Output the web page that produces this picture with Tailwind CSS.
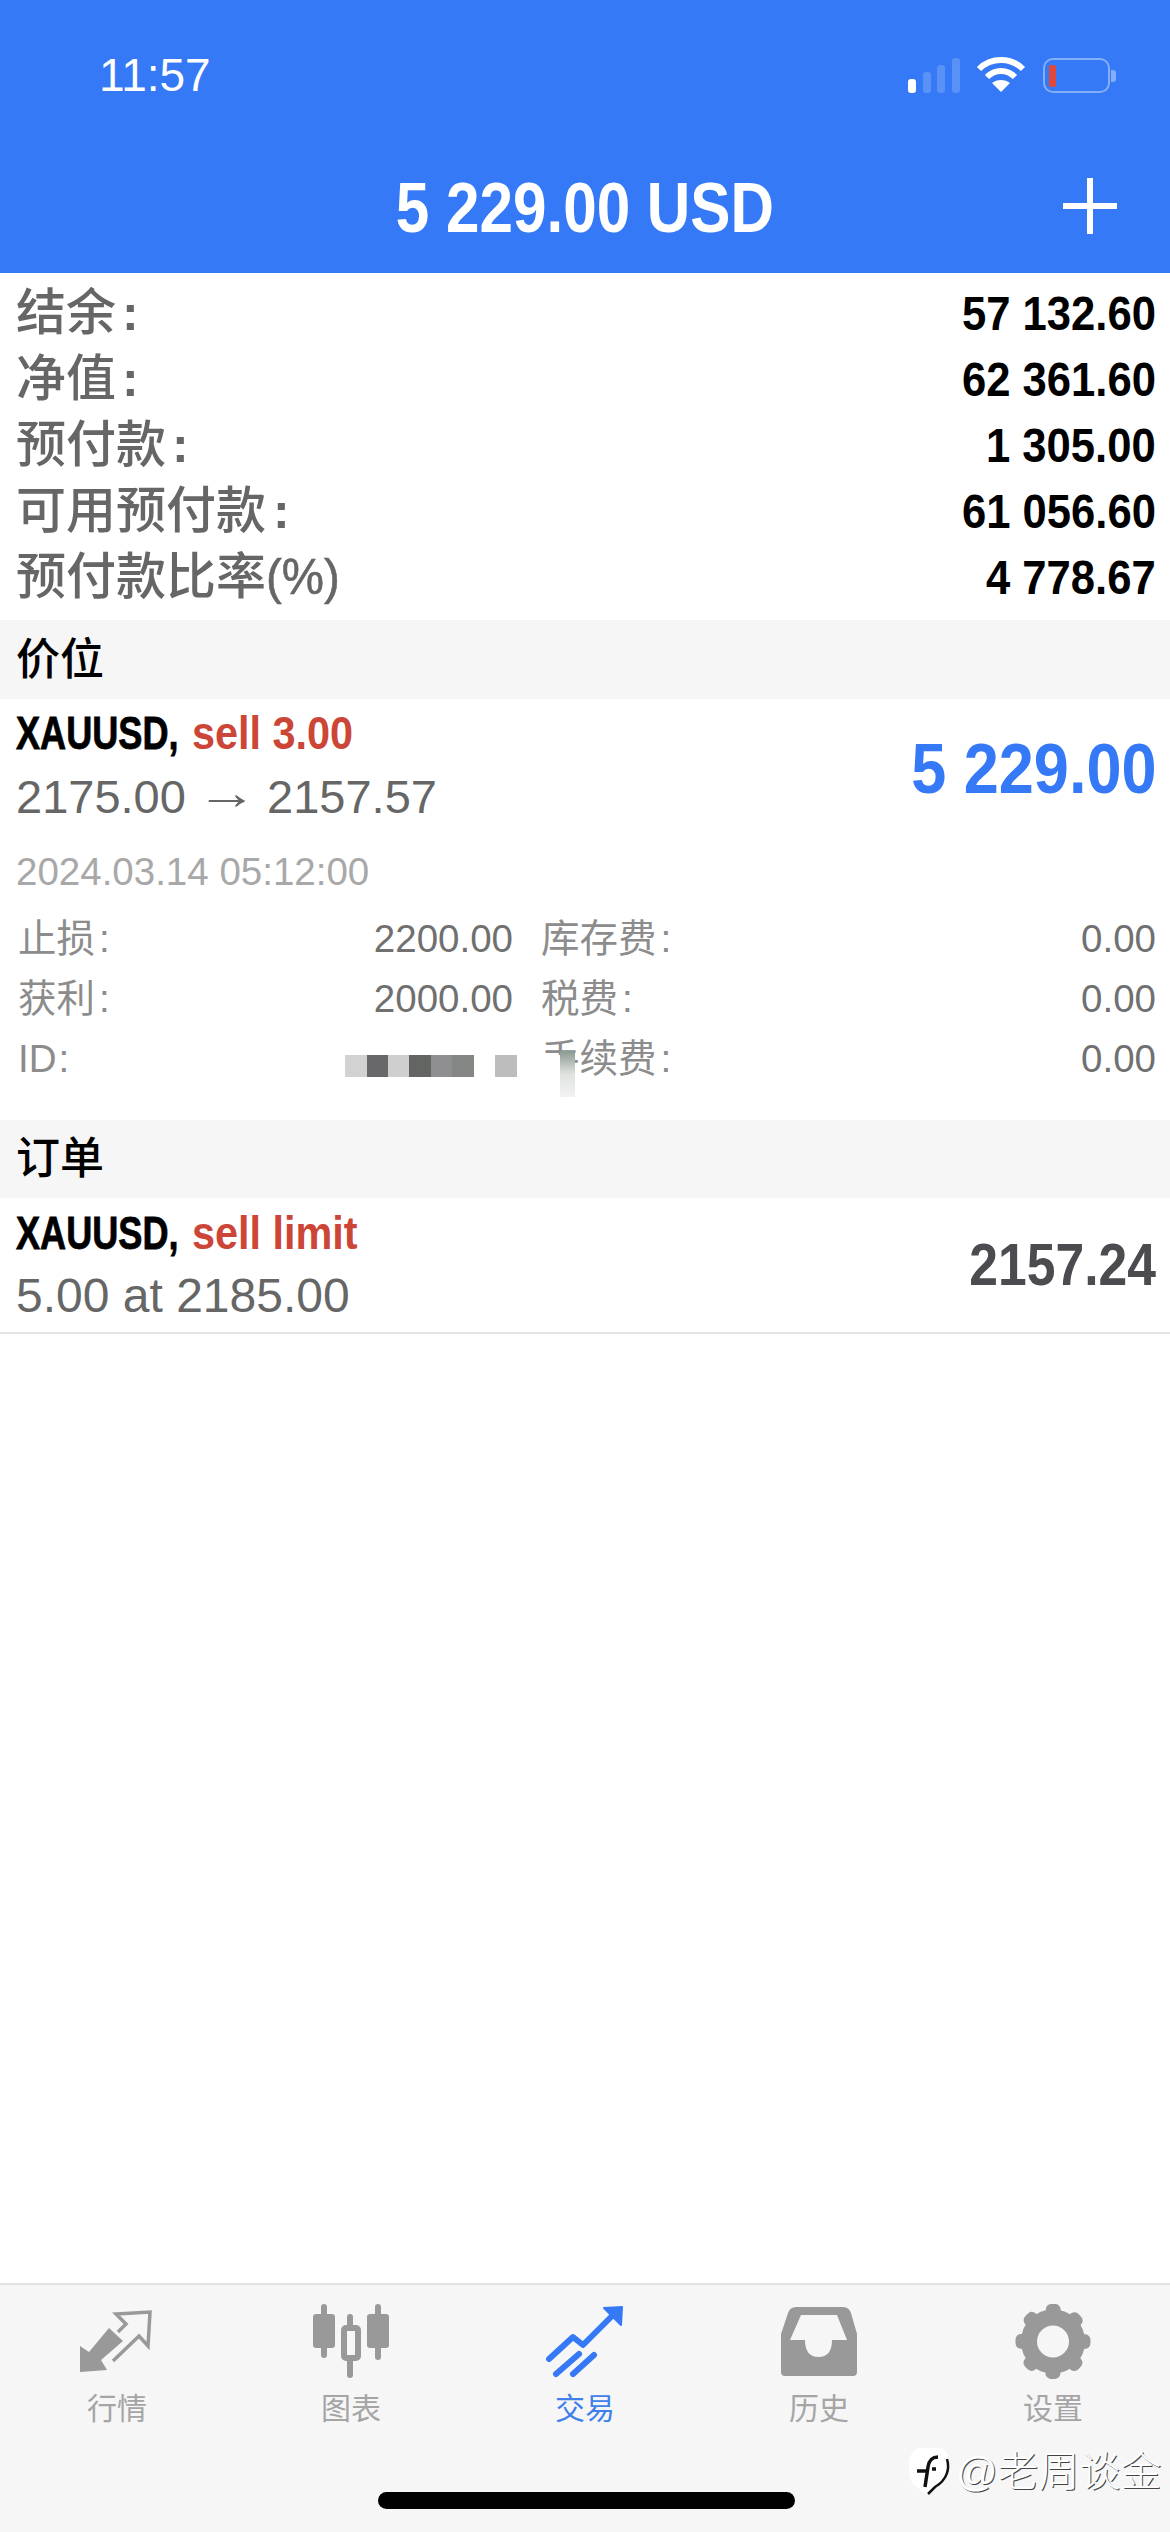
<!DOCTYPE html>
<html lang="zh-CN">
<head>
    <meta charset="UTF-8">
    <meta name="viewport" content="width=device-width, initial-scale=1.0">
    <title>交易</title>
    <script src="https://cdn.jsdelivr.net/npm/@tailwindcss/browser@4"></script>
</head>
<body class="bg-white">
    <div class="relative flex flex-col w-[1170px] h-[2532px] overflow-hidden bg-white font-['Liberation_Sans','Noto_Sans_CJK_SC',sans-serif]">
        <!-- Header -->
        <header class="h-[273px] bg-[#3579f6] text-white shrink-0">
            <div class="flex items-center h-[64px] mt-[43px] pl-[99px] pt-0">
                <span class="text-[46px] leading-[64px]">11:57</span>
                <div class="flex items-center ml-auto mr-[60px]">
                    <svg class="w-[52px] h-[36px]" viewBox="0 0 52 36">
                        <rect x="0" y="22" width="8" height="14" rx="3" fill="#fff"/>
                        <rect x="15" y="15" width="8" height="21" rx="3" fill="#fff" fill-opacity=".18"/>
                        <rect x="29" y="8" width="8" height="28" rx="3" fill="#fff" fill-opacity=".18"/>
                        <rect x="44" y="1" width="8" height="35" rx="3" fill="#fff" fill-opacity=".18"/>
                    </svg>
                    <svg class="w-[50px] h-[38px] ml-[16px]" viewBox="0 0 50 38" fill="none" stroke="#fff" stroke-width="6">
                        <path d="M3 13C15 1 35 1 47 13"/>
                        <path d="M11 21C19 13 31 13 39 21"/>
                        <path d="M25 36L16 27C21 23 29 23 34 27Z" fill="#fff" stroke="none"/>
                    </svg>
                    <div class="relative w-[67px] h-[35px] ml-[17px] rounded-[10px] border-2 border-white/40">
                        <div class="absolute left-[4px] top-[5px] w-[7px] h-[22px] rounded-[2px] bg-[#e0463a]"></div>
                        <div class="absolute -right-[8px] top-[10px] w-[5px] h-[12px] rounded-r-[3px] bg-white/40"></div>
                    </div>
                </div>
            </div>
            <div class="grid grid-cols-[1fr_auto_1fr] items-center h-[130px] mt-[36px]">
                <div></div>
                <div class="text-[70px] font-bold leading-[130px] whitespace-nowrap scale-x-[.86]">5 229.00 USD</div>
                <svg class="justify-self-end mr-[53px] -mt-[4px] w-[54px] h-[56px]" viewBox="0 0 54 56" fill="#fff">
                    <rect x="24" y="0" width="6" height="56"/>
                    <rect x="0" y="25" width="54" height="6"/>
                </svg>
            </div>
        </header>

        <main class="flex-1">
            <!-- Account summary -->
            <section class="pt-[7px] pb-[10px] pl-[16px] pr-[14px] text-[50px] leading-[66px] font-medium text-[#666]">
                <div class="flex justify-between h-[66px]"><span>结余<span class="ml-[6px] font-bold">:</span></span><b class="text-[49px] text-black origin-right scale-x-[.89] whitespace-nowrap">57 132.60</b></div>
                <div class="flex justify-between h-[66px]"><span>净值<span class="ml-[6px] font-bold">:</span></span><b class="text-[49px] text-black origin-right scale-x-[.89] whitespace-nowrap">62 361.60</b></div>
                <div class="flex justify-between h-[66px]"><span>预付款<span class="ml-[6px] font-bold">:</span></span><b class="text-[49px] text-black origin-right scale-x-[.89] whitespace-nowrap">1 305.00</b></div>
                <div class="flex justify-between h-[66px]"><span>可用预付款<span class="ml-[7px] font-bold">:</span></span><b class="text-[49px] text-black origin-right scale-x-[.89] whitespace-nowrap">61 056.60</b></div>
                <div class="flex justify-between h-[66px]"><span>预付款比率<span class="inline-block origin-left scale-x-[.95] [-webkit-text-stroke:0.6px_#666]">(%)</span></span><b class="text-[49px] text-black origin-right scale-x-[.89] whitespace-nowrap">4 778.67</b></div>
            </section>

            <!-- Positions -->
            <h2 class="h-[79px] px-[16px] bg-[#f6f6f6] text-[44px] leading-[79px] font-medium text-black">价位</h2>
            <section class="relative h-[421px] pl-[16px] pr-[14px]">
                <div class="flex justify-between items-center h-[130px] pt-[2px]">
                    <div>
                        <div class="flex h-[64px] text-[46px] leading-[64px] font-bold whitespace-nowrap">
                            <span class="text-black origin-left scale-x-[.785] mr-[-31px] [-webkit-text-stroke:0.8px_black]">XAUUSD,</span>
                            <span class="text-[#cc4638] origin-left scale-x-[.9]">sell 3.00</span>
                        </div>
                        <div class="h-[64px] text-[47px] leading-[64px] text-[#666] whitespace-nowrap">2175.00 <span class="inline-block mx-[4px] -translate-y-[4px] scale-x-[1.3]">→</span> 2157.57</div>
                    </div>
                    <div class="mt-[8px] text-[70px] font-bold text-[#3579f6] whitespace-nowrap origin-right scale-x-[.9]">5 229.00</div>
                </div>
                <div class="h-[64px] mt-[11px] text-[38.5px] leading-[64px] text-[#a8a8a8]">2024.03.14 05:12:00</div>
                <div class="grid grid-cols-[497px_1fr] gap-x-[28px] mt-[5px] text-[38.5px] leading-[60px]">
                    <div class="flex justify-between h-[60px] pl-[2px]"><span class="text-[#8c8c8c]">止损<span class="ml-[4px]">:</span></span><span class="text-[#707070]">2200.00</span></div>
                    <div class="flex justify-between h-[60px]"><span class="text-[#8c8c8c]">库存费<span class="ml-[4px]">:</span></span><span class="text-[#707070]">0.00</span></div>
                    <div class="flex justify-between h-[60px] pl-[2px]"><span class="text-[#8c8c8c]">获利<span class="ml-[4px]">:</span></span><span class="text-[#707070]">2000.00</span></div>
                    <div class="flex justify-between h-[60px]"><span class="text-[#8c8c8c]">税费<span class="ml-[4px]">:</span></span><span class="text-[#707070]">0.00</span></div>
                    <div class="flex justify-between h-[60px] pl-[2px]"><span class="text-[#8c8c8c]">ID<span class="ml-[2px]">:</span></span></div>
                    <div class="flex justify-between h-[60px]"><span class="text-[#8c8c8c]">手续费<span class="ml-[4px]">:</span></span><span class="text-[#707070]">0.00</span></div>
                </div>
                <!-- blurred-out ticket id -->
                <div class="absolute left-[345px] top-[356px] flex h-[22px]">
                    <div class="w-[22px] bg-[#d2d2d2]"></div>
                    <div class="w-[21px] bg-[#68686a]"></div>
                    <div class="w-[21px] bg-[#cfcfcf]"></div>
                    <div class="w-[22px] bg-[#636563]"></div>
                    <div class="w-[21px] bg-[#8f8f91]"></div>
                    <div class="w-[22px] bg-[#858785]"></div>
                    <div class="w-[21px]"></div>
                    <div class="w-[22px] bg-[#bdbdbd]"></div>
                </div>
                <div class="absolute left-[541px] top-[356px] w-[19px] h-[42px] bg-white"></div>
                <div class="absolute left-[560px] top-[352px] w-[15px] h-[46px] bg-gradient-to-b from-[#8b9a90] via-[#dfe3e0] to-[#f2f2f2]"></div>
            </section>

            <!-- Orders -->
            <h2 class="h-[78px] px-[16px] bg-[#f6f6f6] text-[44px] leading-[78px] font-medium text-black">订单</h2>
            <section class="flex justify-between items-center h-[136px] pl-[16px] pr-[14px] border-b-2 border-[#e4e4e4]">
                <div>
                    <div class="flex h-[64px] -mt-[2px] text-[46px] leading-[64px] font-bold whitespace-nowrap">
                        <span class="text-black origin-left scale-x-[.785] mr-[-31px] [-webkit-text-stroke:0.8px_black]">XAUUSD,</span>
                        <span class="text-[#cc4638] origin-left scale-x-[.9]">sell limit</span>
                    </div>
                    <div class="h-[62px] text-[48px] leading-[62px] text-[#666] whitespace-nowrap">5.00 at 2185.00</div>
                </div>
                <div class="text-[60px] font-bold text-[#4c4c50] whitespace-nowrap origin-right scale-x-[.86]">2157.24</div>
            </section>
        </main>

        <!-- Tab bar -->
        <nav class="relative grid grid-cols-5 h-[249px] shrink-0 pt-[19px] bg-[#f6f6f6] border-t-2 border-[#e2e2e2] text-[30px] leading-[40px] text-[#a5a5a5]">
            <div class="flex flex-col items-center">
                <svg class="w-[80px] h-[76px]" viewBox="0 0 80 76">
                    <path d="M3 68V42L12 48L32 24L46 37L24 56L30 66Z" fill="#999"/>
                    <path d="M36 57L62 32L71 42L73 8L39 10L49 20L41 28" fill="none" stroke="#999" stroke-width="3.5"/>
                </svg>
                <span class="mt-[9px]">行情</span>
            </div>
            <div class="flex flex-col items-center">
                <svg class="w-[80px] h-[76px]" viewBox="0 0 80 76" fill="#999">
                    <rect x="10" y="0" width="6" height="54" rx="3"/>
                    <rect x="2" y="10" width="22" height="34" rx="3"/>
                    <rect x="36" y="10" width="6" height="64" rx="3"/>
                    <rect x="33" y="24" width="14" height="30" rx="2" fill="#f6f6f6" stroke="#999" stroke-width="6"/>
                    <rect x="64" y="0" width="6" height="56" rx="3"/>
                    <rect x="56" y="10" width="22" height="34" rx="3"/>
                </svg>
                <span class="mt-[9px]">图表</span>
            </div>
            <div class="flex flex-col items-center text-[#3f80ea]">
                <svg class="w-[80px] h-[76px] ml-[2px]" viewBox="0 0 80 76" fill="none" stroke="#3579f6" stroke-width="6" stroke-linecap="round" stroke-linejoin="round">
                    <path d="M3 55L27 33L37 41L69 9"/>
                    <path d="M10 70L33 50"/>
                    <path d="M27 70L48 51"/>
                    <path d="M58 4L76 3L75 21Z" fill="#3579f6" stroke-width="2"/>
                </svg>
                <span class="mt-[9px]">交易</span>
            </div>
            <div class="flex flex-col items-center">
                <svg class="w-[80px] h-[76px]" viewBox="0 0 80 76">
                    <path fill="#999" fill-rule="evenodd" d="M17 3H64Q70 3 72 9L78 30V68Q78 72 74 72H6Q2 72 2 68V30L9 9Q11 3 17 3ZM22 11H58L68 36H53Q53 53 39.5 53Q26 53 26 36H11Z"/>
                </svg>
                <span class="mt-[9px]">历史</span>
            </div>
            <div class="flex flex-col items-center">
                <svg class="w-[80px] h-[76px]" viewBox="0 0 80 76" fill="none" stroke="#999">
                    <circle cx="40" cy="37.5" r="24" stroke-width="16"/>
                    <circle cx="40" cy="37.5" r="32" stroke-width="11" stroke-linecap="round" stroke-dasharray="4 21.13" stroke-dashoffset="2"/>
                </svg>
                <span class="mt-[9px]">设置</span>
            </div>

            <!-- Home indicator -->
            <div class="absolute left-[378px] top-[207px] w-[417px] h-[17px] rounded-full bg-black"></div>

            <!-- Watermark -->
            <div class="absolute left-[909px] top-[162px] flex items-center">
                <svg class="w-[42px] h-[50px]" viewBox="0 0 42 50">
                    <path d="M12 1H30C37 1 40 8 40 20C40 33 33 39 24 41L17 48L8 40C2 38 0 30 0 20C0 8 4 1 12 1Z" fill="#fff"/>
                    <path d="M38 12C41 22 38 33 26 40L19 47" fill="none" stroke="#111" stroke-width="2.5"/>
                    <path d="M29 10C22 10 20 14 19 20L16 40" fill="none" stroke="#111" stroke-width="3.5"/>
                    <path d="M8 24H17M23 22H27" fill="none" stroke="#111" stroke-width="3.5"/>
                </svg>
                <span class="ml-[5px] text-[41px] leading-[48px] font-light text-white whitespace-nowrap [text-shadow:1px_1px_0_#444]">@老周谈金</span>
            </div>
        </nav>
    </div>
</body>
</html>
